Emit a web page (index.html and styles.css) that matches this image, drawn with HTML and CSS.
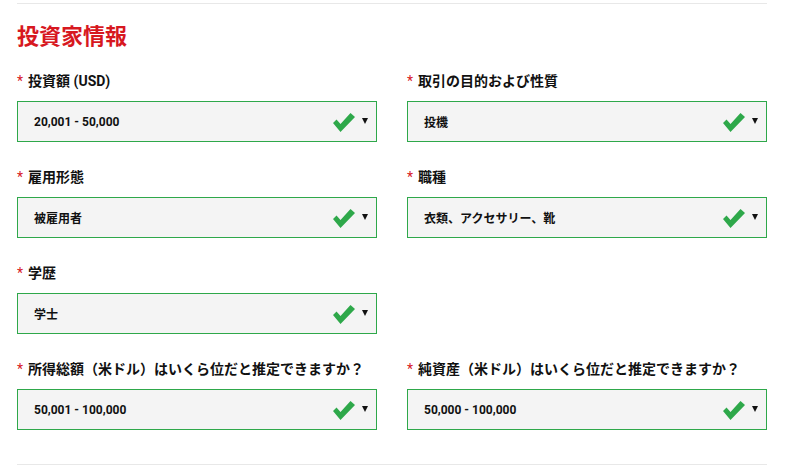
FILE: index.html
```html
<!DOCTYPE html>
<html lang="ja">
<head>
<meta charset="utf-8">
<link rel="stylesheet" href="styles.css">
</head>
<body>
<section class="panel">
  <h2 class="title">投資家情報</h2>
  <div class="grid">
    <div class="field">
      <div class="label"><span class="req">*</span>投資額 (USD)</div>
      <div class="select"><span class="value">20,001 - 50,000</span><svg class="check" viewBox="0 0 22 19"><polygon points="0,10 3.5,6.5 7.5,11 17.5,0 22,4 7.5,19" fill="#2ea84a"/></svg><span class="arrow"></span></div>
    </div>
    <div class="field">
      <div class="label"><span class="req">*</span>取引の目的および性質</div>
      <div class="select"><span class="value">投機</span><svg class="check" viewBox="0 0 22 19"><polygon points="0,10 3.5,6.5 7.5,11 17.5,0 22,4 7.5,19" fill="#2ea84a"/></svg><span class="arrow"></span></div>
    </div>
    <div class="field">
      <div class="label"><span class="req">*</span>雇用形態</div>
      <div class="select"><span class="value">被雇用者</span><svg class="check" viewBox="0 0 22 19"><polygon points="0,10 3.5,6.5 7.5,11 17.5,0 22,4 7.5,19" fill="#2ea84a"/></svg><span class="arrow"></span></div>
    </div>
    <div class="field">
      <div class="label"><span class="req">*</span>職種</div>
      <div class="select"><span class="value">衣類、アクセサリー、靴</span><svg class="check" viewBox="0 0 22 19"><polygon points="0,10 3.5,6.5 7.5,11 17.5,0 22,4 7.5,19" fill="#2ea84a"/></svg><span class="arrow"></span></div>
    </div>
    <div class="field">
      <div class="label"><span class="req">*</span>学歴</div>
      <div class="select"><span class="value">学士</span><svg class="check" viewBox="0 0 22 19"><polygon points="0,10 3.5,6.5 7.5,11 17.5,0 22,4 7.5,19" fill="#2ea84a"/></svg><span class="arrow"></span></div>
    </div>
    <div class="field empty"></div>
    <div class="field">
      <div class="label"><span class="req">*</span>所得総額（米ドル）はいくら位だと推定できますか？</div>
      <div class="select"><span class="value">50,001 - 100,000</span><svg class="check" viewBox="0 0 22 19"><polygon points="0,10 3.5,6.5 7.5,11 17.5,0 22,4 7.5,19" fill="#2ea84a"/></svg><span class="arrow"></span></div>
    </div>
    <div class="field">
      <div class="label"><span class="req">*</span>純資産（米ドル）はいくら位だと推定できますか？</div>
      <div class="select"><span class="value">50,000 - 100,000</span><svg class="check" viewBox="0 0 22 19"><polygon points="0,10 3.5,6.5 7.5,11 17.5,0 22,4 7.5,19" fill="#2ea84a"/></svg><span class="arrow"></span></div>
    </div>
  </div>
  <div class="footer-line"></div>
</section>
</body>
</html>
```
FILE: styles.css
```css
html, body {
  margin: 0;
  padding: 0;
  background: #ffffff;
}
body {
  font-family: Roboto, "Noto Sans CJK JP", "Liberation Sans", sans-serif;
  color: #111111;
}
.panel {
  margin: 3px 0 0 17px;
  width: 750px;
  border-top: 1px solid #e8e8e8;
}
.title {
  margin: 18px 0 0 0;
  font-size: 22px;
  line-height: 30px;
  font-weight: 700;
  color: #d7181f;
}
.grid {
  margin-top: 19px;
  display: grid;
  grid-template-columns: 360px 360px;
  column-gap: 30px;
  row-gap: 26px;
}
.field {
  height: 70px;
}
.label {
  font-size: 14px;
  line-height: 20px;
  font-weight: 700;
  color: #111111;
  white-space: nowrap;
  margin-bottom: 10px;
}
.req {
  color: #d7181f;
  font-weight: 400;
  margin-right: 5px;
}
.select {
  box-sizing: border-box;
  height: 41px;
  border: 1px solid #2ea84a;
  background: #f4f4f4;
  display: flex;
  align-items: center;
  padding: 0 8px 0 16px;
}
.value {
  flex: 1;
  font-size: 12px;
  font-weight: 700;
  color: #111111;
}
.check {
  width: 22px;
  height: 19px;
  margin-right: 7px;
  margin-top: 1px;
}
.arrow {
  width: 0;
  height: 0;
  border-left: 3px solid transparent;
  border-right: 3px solid transparent;
  border-top: 6px solid #111111;
  margin-top: -2px;
}
.footer-line {
  margin-top: 35px;
  border-top: 1px solid #e8e8e8;
}
```
